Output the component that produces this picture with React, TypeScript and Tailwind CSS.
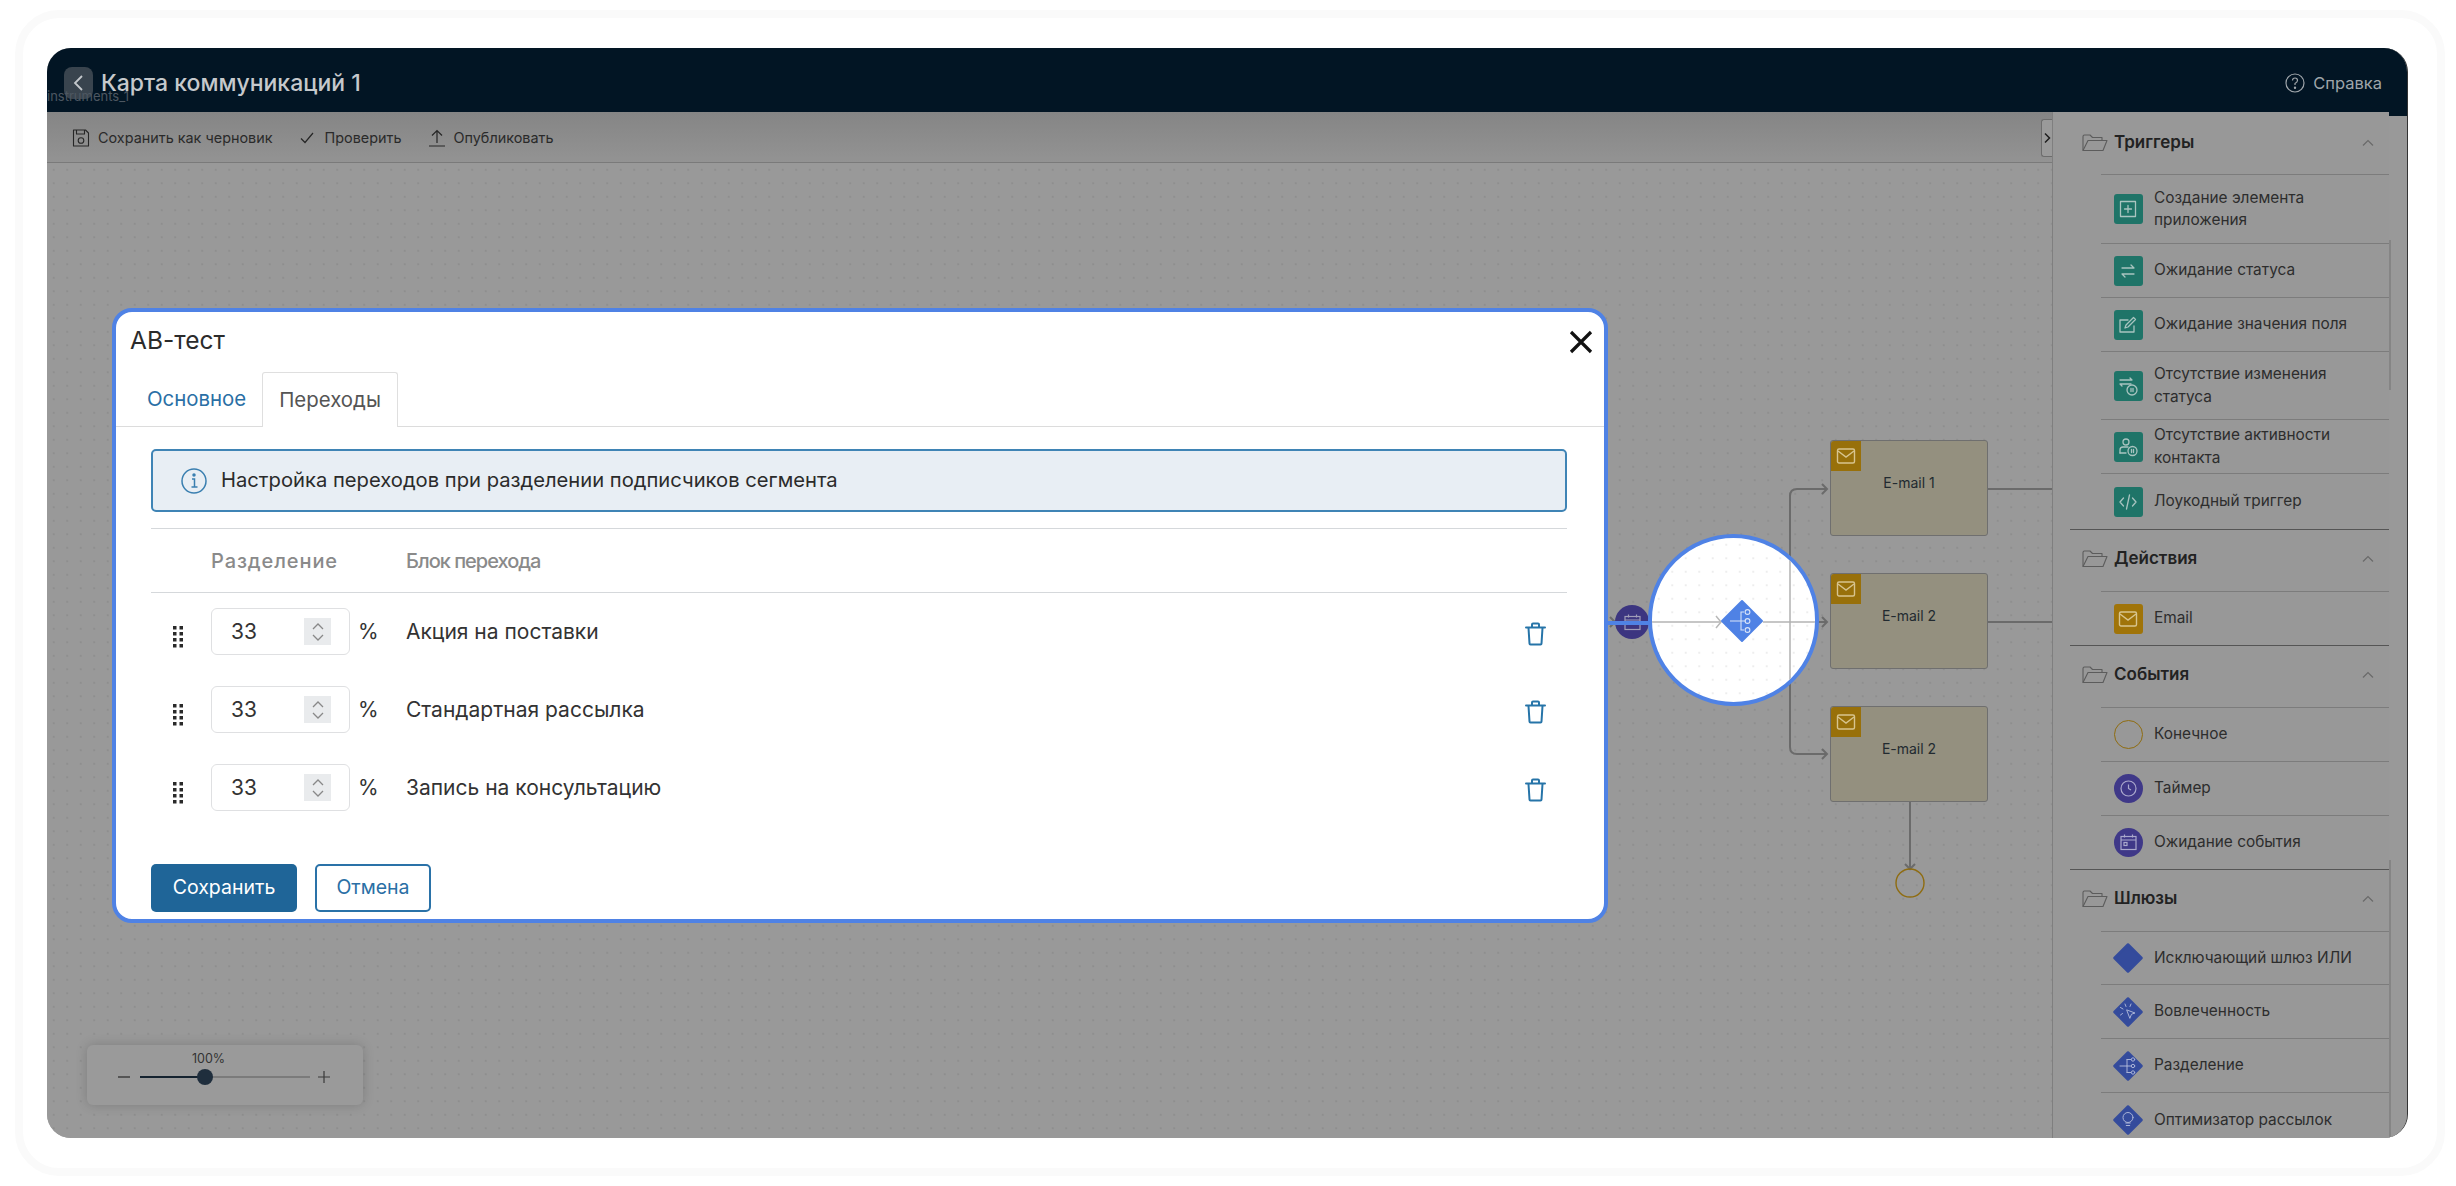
import React from "react";

const Mail = ({ c = "#d9c9a0", s = 20 }: { c?: string; s?: number }) => (
  <svg width={s} height={s} viewBox="0 0 20 20" fill="none" stroke={c} strokeWidth="1.4">
    <rect x="1.5" y="3" width="17" height="14" rx="1.5" />
    <path d="M2 5l8 6 8-6" />
  </svg>
);

const Teal = ({ children }: { children: React.ReactNode }) => (
  <div className="w-[29px] h-[30px] rounded-[3px] bg-[#1f7468] flex items-center justify-center shrink-0">
    <svg width="22" height="22" viewBox="0 0 22 22" fill="none" stroke="#a9c4c0" strokeWidth="1.3" strokeLinecap="round" strokeLinejoin="round">
      {children}
    </svg>
  </div>
);

const Gate = ({ children }: { children?: React.ReactNode }) => (
  <svg width="30" height="30" viewBox="0 0 30 30" fill="none" className="shrink-0">
    <path d="M15 1.500L28.500 15L15 28.500L1.500 15Z" fill="#344b9c" stroke="#344b9c" strokeWidth="2.500" strokeLinejoin="round" />
    <g stroke="#a9b3d6" strokeWidth="1" strokeLinecap="round">{children}</g>
  </svg>
);

const Purple = ({ children }: { children: React.ReactNode }) => (
  <div className="w-[29px] h-[29px] rounded-full bg-[#3f3888] flex items-center justify-center shrink-0">
    <svg width="19" height="19" viewBox="0 0 19 19" fill="none" stroke="#aaa8cc" strokeWidth="1.2">
      {children}
    </svg>
  </div>
);

const FolderIcon = () => (
  <svg width="26" height="18" viewBox="0 0 26 18" fill="none" stroke="#5c5c5c" strokeWidth="1.1" strokeLinejoin="round">
    <path d="M1 16.5V2.5Q1 1 2.5 1H8l2.5 2.5H20V6" />
    <path d="M1 16.5L6 6.5H25L21 16.5Z" />
  </svg>
);

const sections = [
  {
    title: "Триггеры",
    head: "h-[62px]",
    items: [
      { h: "h-[69px]", t: "Создание элемента приложения", i: <Teal><rect x="3.5" y="3.5" width="15" height="15" /><path d="M11 7.5v7M7.5 11h7" /></Teal> },
      { h: "h-[54px]", t: "Ожидание статуса", i: <Teal><path d="M5 8h12M14 5l3 3M17 14H5M8 17l-3-3" /></Teal> },
      { h: "h-[54px]", t: "Ожидание значения поля", i: <Teal><path d="M17 12v6H3V6h8" /><path d="M8 14l1-3 7.5-7.500 2 2L11 13z" /></Teal> },
      { h: "h-[68px]", t: "Отсутствие изменения статуса", i: <Teal><path d="M3 5h12M13 3l2 2M14 9H3M5 11L3 9" /><circle cx="15" cy="15" r="5" /><path d="M14 13.500v3M16 13.500v3" /></Teal> },
      { h: "h-[54px]", t: "Отсутствие активности контакта", i: <Teal><circle cx="9" cy="6" r="3" /><path d="M3 17v-3q0-3 3-3h5" /><path d="M3 17h6" /><circle cx="15.500" cy="15" r="4.500" /><path d="M14.500 13.500v3M16.500 13.500v3" /></Teal> },
      { h: "h-[55px]", t: "Лоукодный триггер", i: <Teal><path d="M6.500 7L3 11l3.500 4M15.500 7L19 11l-3.500 4M12.500 4l-3 14" /></Teal> },
    ],
  },
  {
    title: "Действия",
    head: "h-[61px] pb-[4px]",
    items: [
      { h: "h-[53px]", t: "Email", i: <div className="w-[29px] h-[30px] rounded-[3px] bg-[#a07409] flex items-center justify-center shrink-0"><Mail c="#d8c58f" s={20} /></div> },
    ],
  },
  {
    title: "События",
    head: "h-[61px] pb-[4px]",
    items: [
      { h: "h-[54px]", t: "Конечное", i: <div className="w-[29px] h-[29px] rounded-full border border-[#8f6c10] shrink-0" /> },
      { h: "h-[54px]", t: "Таймер", i: <Purple><circle cx="9.500" cy="9.500" r="7.500" /><path d="M9.500 5.500v4l2.500 1.500" /></Purple> },
      { h: "h-[53px]", t: "Ожидание события", i: <Purple><rect x="2" y="3.500" width="15" height="13" /><path d="M2 7h15M5.500 1.500v3M13.500 1.500v3" /><rect x="5" y="9.500" width="3" height="3" /></Purple> },
    ],
  },
  {
    title: "Шлюзы",
    head: "h-[61px] pb-[4px]",
    items: [
      { h: "h-[53px]", t: "Исключающий шлюз ИЛИ", i: <Gate /> },
      { h: "h-[54px]", t: "Вовлеченность", i: <Gate><path d="M14 13l8 3-3.500 1.200L17 21zM10 12l-2.500-1.500M13 9.500L12 7M17 9.500L18 7M9.500 16.500L7.500 18" /></Gate> },
      { h: "h-[54px]", t: "Разделение", i: <Gate><path d="M7 15h7M14 8.500v13M14 8.500h4M14 15h4M14 21.500h4" /><circle cx="20" cy="8.500" r="1.700" /><circle cx="20" cy="15" r="1.700" /><circle cx="20" cy="21.500" r="1.700" /></Gate> },
      { h: "h-[54px]", t: "Оптимизатор рассылок", i: <Gate><circle cx="15" cy="12.500" r="5" /><path d="M12.800 18h4.400M13.300 20.500h3.400" /></Gate> },
    ],
  },
];

const Trash = () => (
  <svg width="21" height="24" viewBox="0 0 21 24" fill="none" stroke="#2674a8" strokeWidth="2" strokeLinejoin="round" strokeLinecap="round">
    <path d="M1 5.500h19" />
    <path d="M7 5V2.500Q7 1.500 8 1.500h5q1 0 1 1V5" />
    <path d="M3.500 6l1 15.500q0 1 1 1h10q1 0 1-1l1-15.500" />
  </svg>
);

const Handle = () => (
  <svg width="10" height="22" viewBox="0 0 10 22" fill="#2a2a2a" className="mt-[10px]">
    {[0, 6, 12, 18].map((y) => (
      <g key={y}>
        <rect x="0" y={y} width="3.500" height="3.500" />
        <rect x="6.500" y={y} width="3.500" height="3.500" />
      </g>
    ))}
  </svg>
);

const rows = ["Акция на поставки", "Стандартная рассылка", "Запись на консультацию"];

const blocks = [
  { t: "E-mail 1", cls: "top-[277px]" },
  { t: "E-mail 2", cls: "top-[410px]" },
  { t: "E-mail 2", cls: "top-[543px]" },
];

export default function App() {
  return (
    <div className="w-[2456px] h-[1186px] bg-white pl-[15px] pt-[10px] font-['Inter',sans-serif] overflow-hidden">
      <div className="w-[2430px] h-[1166px] border-8 border-[#fafafa] rounded-[44px] pl-[24px] pt-[30px]">
        <div className="relative w-[2361px] h-[1090px] rounded-[24px] overflow-hidden flex flex-col bg-[#999999] border-r border-[#333]">
          {/* header */}
          <header className="h-[64px] pt-[6px] bg-[#021524] flex items-center shrink-0 relative z-10">
            <div className="ml-[17px] w-[29px] h-[32px] rounded-[8px] bg-[#39444e] flex items-center justify-center">
              <svg width="14" height="18" viewBox="0 0 14 18" fill="none" stroke="#c4c8cc" strokeWidth="1.800"><path d="M10 2L3 9l7 7" /></svg>
            </div>
            <div className="ml-[8px] text-[23px] font-medium text-[#c6c9cc] leading-none">Карта коммуникаций 1</div>
            <div className="absolute left-0 top-[42px] text-[13px] leading-none text-[#4d5761]">instruments_1</div>
            <div className="ml-auto mr-[25px] flex items-center gap-[8px] text-[#9fa5aa] text-[16.500px]">
              <svg width="20" height="20" viewBox="0 0 20 20" fill="none" stroke="#9fa5aa" strokeWidth="1.200">
                <circle cx="10" cy="10" r="9" />
                <path d="M7.500 7.500Q7.500 5 10 5t2.500 2.500Q12.500 9 10 10.500V12" />
                <circle cx="10" cy="14.800" r=".6" fill="#9fa5aa" />
              </svg>
              Справка
            </div>
          </header>

          <div className="flex flex-1 min-h-0">
            {/* main */}
            <div className="w-[2005px] flex flex-col relative">
              <div className="h-[51px] pt-[2px] shrink-0 bg-gradient-to-b from-[#858585] to-[#939393] border-b border-[#7a7a7a] flex items-center pl-[25px] text-[14.400px] text-[#2a2a2a]">
                <svg width="18" height="18" viewBox="0 0 18 18" fill="none" stroke="#262626" strokeWidth="1.100" strokeLinejoin="round">
                  <path d="M1.500 1h12l3 3v13h-15z" />
                  <path d="M4.500 1v4h8V1" />
                  <circle cx="9" cy="11.500" r="2.800" />
                </svg>
                <span className="ml-[8px]">Сохранить как черновик</span>
                <svg className="ml-[27px]" width="14" height="14" viewBox="0 0 14 14" fill="none" stroke="#262626" strokeWidth="1.200"><path d="M1 7.500l4 4L13 2" /></svg>
                <span className="ml-[11px]">Проверить</span>
                <svg className="ml-[27px]" width="16" height="18" viewBox="0 0 16 18" fill="none" stroke="#262626" strokeWidth="1.200"><path d="M8 14V1.500M3 6.500l5-5 5 5M0 17h16" /></svg>
                <span className="ml-[9px]">Опубликовать</span>
                <div className="absolute right-0 top-[7px] w-[11px] h-[38px] rounded-l-[3px] border border-r-0 border-[#6d6d6d] bg-[#9a9a9a] flex items-center justify-center">
                  <svg width="8" height="12" viewBox="0 0 8 12" fill="none" stroke="#1e1e1e" strokeWidth="1.500"><path d="M2 1.500L6.500 6 2 10.500" /></svg>
                </div>
              </div>

              {/* canvas */}
              <div className="relative flex-1 bg-[#999999] bg-[radial-gradient(#8a8a8a_0.6px,transparent_0.9px)] bg-[size:13.500px_13.500px]">
                <svg className="absolute inset-0 w-full h-full" viewBox="47 163 2005 975" fill="none" stroke="#6b6b6b" strokeWidth="2">
                  <path d="M1826 489H1797Q1790 489 1790 496V747Q1790 754 1797 754H1826" />
                  <path d="M1763 622H1826" />
                  <path d="M1822 484l5 5-5 5M1822 617l5 5-5 5M1822 749l5 5-5 5" />
                  <path d="M1988 489H2052M1988 622H2052" />
                  <path d="M1910 802V869M1905 864l5 5 5-5" />
                  <path d="M1608 622H1615M1610 617l5 5-5 5" />
                  <circle cx="1910" cy="883" r="14" stroke="#8f6c10" strokeWidth="1.400" />
                </svg>

                {blocks.map((b, i) => (
                  <div key={i} className={`absolute left-[1783px] ${b.cls} w-[158px] h-[96px] bg-[#94907f] border border-[#6f6f6f] rounded-[3px] flex justify-center pt-[32px] text-[14px] leading-[20px] text-[#222a30]`}>
                    <div className="absolute left-0 top-0 w-[30px] h-[30px] bg-[#98700a] rounded-tl-[3px] flex items-center justify-center">
                      <Mail c="#d7c48f" s={20} />
                    </div>
                    {b.t}
                  </div>
                ))}

                <div className="absolute left-[1568px] top-[442px] w-[34px] h-[34px] rounded-full bg-[#3c3580] flex items-center justify-center">
                  <svg width="19" height="19" viewBox="0 0 19 19" fill="none" stroke="#a09db8" strokeWidth="1.200">
                    <rect x="2" y="3.500" width="15" height="13" />
                    <path d="M2 7h15M5.500 1.500v3M13.500 1.500v3" />
                  </svg>
                </div>

                {/* zoom widget */}
                <div className="absolute left-[40px] top-[882px] w-[276px] h-[60px] rounded-[6px] bg-[#9a9a9a] shadow-[0_0_12px_rgba(0,0,0,0.18)]">
                  <div className="absolute left-[105px] top-[6px] text-[12.500px] leading-[16px] text-[#333]">100%</div>
                  <div className="absolute left-[31px] top-[31px] w-[12px] h-[2px] bg-[#555]" />
                  <div className="absolute left-[53px] top-[31px] w-[170px] h-[2px] bg-[#7b7b7b]" />
                  <div className="absolute left-[53px] top-[31px] w-[65px] h-[2px] bg-[#14222f]" />
                  <div className="absolute left-[110px] top-[24px] w-[16px] h-[16px] rounded-full bg-[#1f2e3d]" />
                  <svg className="absolute left-[231px] top-[26px]" width="12" height="12" viewBox="0 0 12 12" stroke="#3a3a3a" strokeWidth="1.200"><path d="M6 0v12M0 6h12" /></svg>
                </div>
              </div>
            </div>

            {/* sidebar */}
            <aside className="w-[337px] shrink-0 bg-[#989898] border-l border-[#7f7f7f] pl-[17px] overflow-hidden relative">
              {sections.map((s) => (
                <section key={s.title} className="border-b border-[#555555]">
                  <div className={`${s.head} flex items-center pl-[12px] pr-[15px]`}>
                    <FolderIcon />
                    <span className="ml-[6px] text-[17px] font-semibold text-[#222]">{s.title}</span>
                    <svg className="ml-auto" width="12" height="8" viewBox="0 0 12 8" fill="none" stroke="#6a6a6a" strokeWidth="1.200"><path d="M1 6.500l5-5 5 5" /></svg>
                  </div>
                  <div className="ml-[31px] border-t border-[#7c7c7c]">
                    {s.items.map((it, i) => (
                      <div key={it.t} className={`${it.h} flex items-center pl-[12px] gap-[11px] ${i < s.items.length - 1 ? "border-b border-[#7c7c7c]" : ""}`}>
                        <div className="w-[30px] flex justify-center shrink-0">{it.i}</div>
                        <span className="w-[215px] text-[15.400px] leading-[22.500px] text-[#2d2d2d]">{it.t}</span>
                      </div>
                    ))}
                  </div>
                </section>
              ))}
            </aside>
            <div className="flex-1 bg-[#999999] relative">
              <div className="h-[4px] bg-[#021524]" />
              <div className="absolute left-0 top-[128px] w-[2px] h-[150px] bg-[#858585]" />
              <div className="absolute left-0 top-[748px] w-[2px] h-[278px] bg-[#858585]" />
            </div>
          </div>

          {/* spotlight */}
          <div className="absolute left-[1601px] top-[486px] w-[171px] h-[172px] rounded-full border-4 border-[#4f82e5] overflow-hidden bg-white bg-[radial-gradient(#e6e6e6_0.6px,transparent_0.9px)] bg-[size:13.500px_13.500px]">
            <svg className="absolute inset-0 w-full h-full" viewBox="1652 538 163 164" fill="none">
              <path d="M1650 622H1720M1763 622H1820" stroke="#c6c6c6" strokeWidth="2" />
              <path d="M1790 530V710" stroke="#b0b0b0" strokeWidth="1.500" />
              <path d="M1716 616l5 6-5 6" stroke="#b8b8b8" strokeWidth="1.500" />
              <path d="M1742 601L1762 621L1742 641L1722 621Z" fill="#4f82e5" stroke="#4f82e5" strokeWidth="2" strokeLinejoin="round" />
              <g stroke="#d9e4f8" strokeWidth="1.100">
                <path d="M1730 621H1744M1744 612H1741V630H1744M1744 621H1746" />
                <circle cx="1747.500" cy="612" r="2.400" />
                <circle cx="1747.500" cy="621" r="2.400" />
                <circle cx="1747.500" cy="630" r="2.400" />
              </g>
            </svg>
          </div>
          <div className="absolute left-[1561px] top-[573px] w-[42px] h-[4px] bg-[#4f82e5]" />

          {/* modal */}
          <div className="absolute left-[65px] top-[260px] w-[1496px] h-[615px] bg-white border-4 border-[#4f82e5] rounded-[20px] overflow-hidden flex flex-col">
            <div className="h-[60px] shrink-0 flex items-start pl-[14px] pr-[11px] pt-[13px] text-[#2b2b2b]">
              <span className="text-[24.500px] leading-[30px]">АВ-тест</span>
              <svg className="ml-auto mt-[5px]" width="24" height="24" viewBox="0 0 24 24" fill="none" stroke="#111" strokeWidth="3.200"><path d="M2 2l20 20M22 2L2 22" /></svg>
            </div>
            <div className="h-[55px] shrink-0 border-b border-[#dcdcdc] flex items-end pl-[15px]">
              <div className="h-[54px] px-[16px] flex items-center text-[20.400px] text-[#2a6fa5]">Основное</div>
              <div className="h-[55px] -mb-px px-[16px] flex items-center text-[20.400px] text-[#555] bg-white border border-b-0 border-[#dfdfdf] rounded-t-[3px]">Переходы</div>
            </div>
            <div className="mt-[22px] ml-[35px] mr-[37px] flex-1 flex flex-col">
              <div className="h-[63px] shrink-0 bg-[#e8eef4] border-2 border-[#3f84b5] rounded-[5px] flex items-center pl-[28px] gap-[14px] text-[20.200px] text-[#2b2b2b]">
                <svg width="26" height="26" viewBox="0 0 26 26" fill="none" stroke="#3a7fb0" strokeWidth="1.500">
                  <circle cx="13" cy="13" r="12" />
                  <path d="M11 11h2.500v8M10.500 19h6" />
                  <circle cx="13" cy="7" r="1" fill="#3a7fb0" />
                </svg>
                Настройка переходов при разделении подписчиков сегмента
              </div>
              <div className="mt-[16px] h-[65px] shrink-0 border-y border-[#d5d8db] flex items-center pl-[60px] text-[20px] text-[#8a8a8a] font-medium">
                <span className="w-[195px] tracking-[0.9px]">Разделение</span>
                <span className="tracking-[-1px]">Блок перехода</span>
              </div>
              <div className="mt-[15px] flex flex-col gap-[31px]">
                {rows.map((r) => (
                  <div key={r} className="h-[47px] flex items-center">
                    <div className="w-[60px] pl-[22px] shrink-0 flex"><Handle /></div>
                    <div className="w-[139px] h-[47px] shrink-0 border border-[#dfe0e2] rounded-[6px] flex items-center justify-between pl-[19px] pr-[18px] text-[21px] text-[#333]">
                      33
                      <div className="w-[27px] h-[27px] bg-[#e9ebed] flex items-center justify-center">
                        <svg width="12" height="20" viewBox="0 0 12 20" fill="none" stroke="#888" strokeWidth="1.300"><path d="M1 7l5-5 5 5M1 13l5 5 5-5" /></svg>
                      </div>
                    </div>
                    <div className="ml-[8px] w-[48px] shrink-0 text-[21px] text-[#333]">%</div>
                    <div className="flex-1 text-[21px] text-[#333]">{r}</div>
                    <div className="mr-[21px] mt-[4px]"><Trash /></div>
                  </div>
                ))}
              </div>
              <div className="mt-[53px] flex gap-[18px]">
                <button className="w-[146px] h-[48px] bg-[#1f6598] rounded-[5px] text-white text-[19.500px]">Сохранить</button>
                <button className="w-[116px] h-[48px] border-2 border-[#2a72a8] rounded-[5px] text-[#2a6fa5] text-[19.500px]">Отмена</button>
              </div>
            </div>
          </div>
        </div>
      </div>
    </div>
  );
}
